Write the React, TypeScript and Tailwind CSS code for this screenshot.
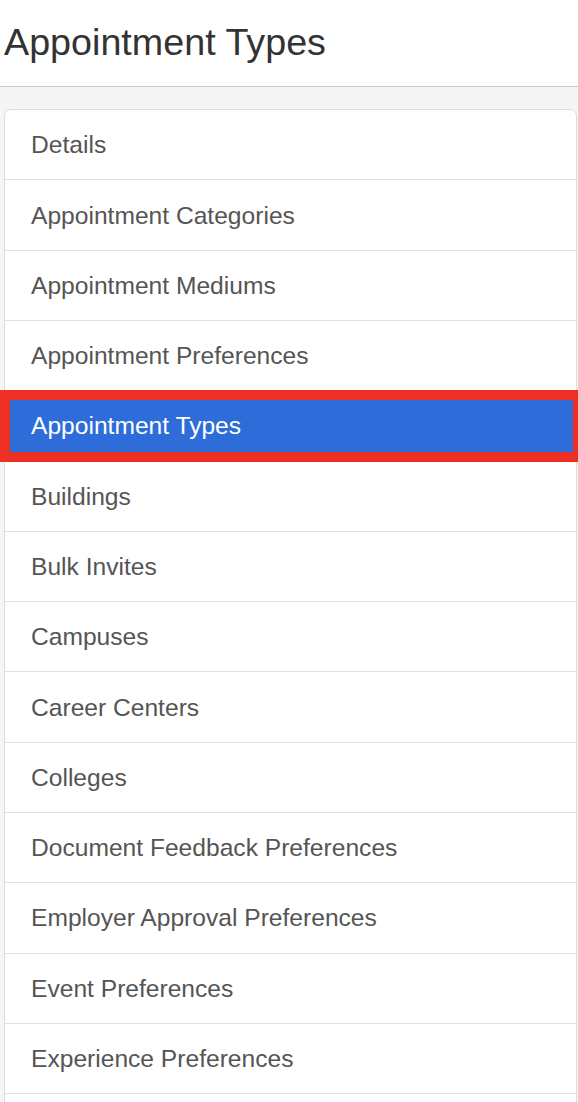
const items = [
  "Details",
  "Appointment Categories",
  "Appointment Mediums",
  "Appointment Preferences",
  "Appointment Types",
  "Buildings",
  "Bulk Invites",
  "Campuses",
  "Career Centers",
  "Colleges",
  "Document Feedback Preferences",
  "Employer Approval Preferences",
  "Event Preferences",
  "Experience Preferences",
  "",
];

const selected = "Appointment Types";

export default function App() {
  return (
    <div className="min-h-screen bg-[#f5f5f5] font-['Liberation_Sans',Arial,sans-serif] overflow-hidden">
      {/* Page header */}
      <div className="bg-white border-b border-[#c3cad2] pt-[24px] pb-[25px] pl-[4px]">
        <h1 className="text-[37.7px] leading-[37px] text-[#333] font-normal">Appointment Types</h1>
      </div>

      {/* Settings menu */}
      <div className="mt-[22px] ml-[4px] mr-[1px] bg-white border border-[#dcdcdc] rounded-t-[7px]">
        {items.map((item, idx) => {
          const active = item === selected;
          return (
            <div
              key={idx}
              className={
                active
                  ? "relative h-[70.3px] flex items-center pl-[26px] pt-[2px] bg-[#2e6dd9] text-white text-[24.6px] border-b border-[#2e6dd9]"
                  : "h-[70.3px] flex items-center pl-[26px] pt-[2px] text-[#555] text-[24.6px] border-b border-[#e2e2e2]"
              }
            >
              <span>{item}</span>
              {active && (
                <div className="absolute top-[-1px] bottom-[-2px] left-[-5px] right-[-2px] border-y-[10px] border-l-[10px] border-r-[5px] border-[#ec3124] pointer-events-none" />
              )}
            </div>
          );
        })}
      </div>
    </div>
  );
}
